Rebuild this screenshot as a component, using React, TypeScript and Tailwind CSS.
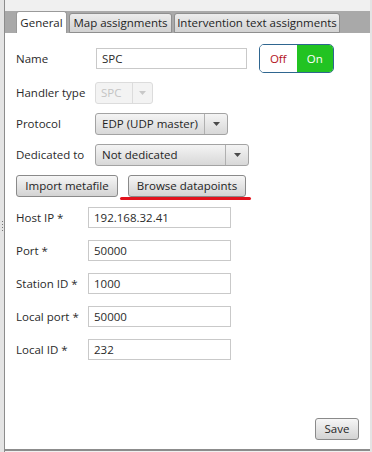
import { ReactNode } from 'react'

const font = { fontFamily: '"Open Sans", "Noto Sans", sans-serif' }

function TextBox({ value, width }: { value: string; width: string }) {
  return (
    <div className={`${width} h-[21px] bg-white border border-[#c9c9c9] flex items-center pl-[5px] text-[#2a2a2a]`}>
      {value}
    </div>
  )
}

function Arrow({ color = '#4a4a4a' }: { color?: string }) {
  return (
    <svg width="7" height="4" viewBox="0 0 7 4">
      <path d="M0 0 L7 0 L3.5 4 Z" fill={color} />
    </svg>
  )
}

function Combo({ value, width, disabled }: { value: string; width: string; disabled?: boolean }) {
  if (disabled) {
    return (
      <div className={`${width} h-[22px] rounded-[3px] border border-[#dcdcdc] bg-[#f3f3f3] flex items-stretch text-[#c4c4c4]`}>
        <div className="flex-1 flex items-center pl-[5px]">{value}</div>
        <div className="w-[20px] border-l border-[#dcdcdc] flex items-center justify-center">
          <Arrow color="#c8c8c8" />
        </div>
      </div>
    )
  }
  return (
    <div className={`${width} h-[22px] rounded-[3px] border border-[#a3a3a3] bg-gradient-to-b from-[#f4f4f4] to-[#d8d8d8] flex items-stretch text-[#1f1f1f]`}>
      <div className="flex-1 flex items-center pl-[6px]">{value}</div>
      <div className="w-[23px] border-l border-[#b0b0b0] flex items-center justify-center">
        <Arrow />
      </div>
    </div>
  )
}

function Button({ children, className = '' }: { children: ReactNode; className?: string }) {
  return (
    <div className={`h-[22px] rounded-[3px] border border-[#8a8a8a] bg-gradient-to-b from-[#f6f6f6] to-[#d3d3d3] flex items-center justify-center text-[#1f1f1f] ${className}`}>
      {children}
    </div>
  )
}

function Row({ label, labelWidth, children, className = '' }: { label: string; labelWidth: string; children: ReactNode; className?: string }) {
  return (
    <div className={`flex items-center ${className}`}>
      <div className={`${labelWidth} text-[#2a2a2a]`}>{label}</div>
      {children}
    </div>
  )
}

export default function App() {
  const fields = [
    { label: 'Port *', value: '50000' },
    { label: 'Station ID *', value: '1000' },
    { label: 'Local port *', value: '50000' },
    { label: 'Local ID *', value: '232' },
  ]

  return (
    <div className="w-[372px] h-[452px] flex bg-[#f0f0f0] text-[11.5px] overflow-hidden" style={font}>
      <div className="w-[4px] bg-[#e4e4e4] flex flex-col items-center justify-center gap-[2px]">
        <div className="w-[1px] h-[1px] bg-[#777]" />
        <div className="w-[1px] h-[1px] bg-[#777]" />
        <div className="w-[1px] h-[1px] bg-[#777]" />
        <div className="w-[1px] h-[1px] bg-[#777]" />
      </div>
      <div className="w-[1px] bg-[#8c8c8c]" />

      <div className="flex-1 flex flex-col">
        <div className="h-[11px] bg-[#f0f0f0]" />
        <div className="h-[22px] bg-[#a9a9a9] flex items-end pl-[11px] gap-[2px]">
          <div className="h-[22px] w-[51px] bg-white rounded-t-[3px] border border-b-0 border-[#9a9a9a] flex items-center justify-center text-[#1f1f1f]">
            General
          </div>
          <div className="h-[20px] w-[103px] rounded-t-[3px] border border-[#8f8f8f] bg-gradient-to-b from-[#ececec] to-[#d2d2d2] flex items-center justify-center text-[#1f1f1f]">
            Map assignments
          </div>
          <div className="h-[20px] w-[166px] rounded-t-[3px] border border-[#8f8f8f] bg-gradient-to-b from-[#ececec] to-[#d2d2d2] flex items-center justify-center text-[#1f1f1f]">
            Intervention text assignments
          </div>
        </div>

        <div className="flex-1 bg-white flex flex-col pl-[11px] pr-[11px]">
          <Row label="Name" labelWidth="w-[80px]" className="mt-[11px] h-[29px]">
            <TextBox value="SPC" width="w-[151px]" />
            <div className="ml-[12px] w-[75px] h-[29px] rounded-[5px] border border-[#2f6690] flex overflow-hidden">
              <div className="flex-1 bg-white flex items-center justify-center text-[#b3121b]">Off</div>
              <div className="flex-1 bg-[#22c322] flex items-center justify-center text-white">On</div>
            </div>
          </Row>

          <Row label="Handler type" labelWidth="w-[79px]" className="mt-[9px]">
            <Combo value="SPC" width="w-[58px]" disabled />
          </Row>

          <Row label="Protocol" labelWidth="w-[79px]" className="mt-[9px]">
            <Combo value="EDP (UDP master)" width="w-[133px]" />
          </Row>

          <Row label="Dedicated to" labelWidth="w-[79px]" className="mt-[9px]">
            <Combo value="Not dedicated" width="w-[154px]" />
          </Row>

          <div className="mt-[9px] flex items-center gap-[10px] relative">
            <Button className="w-[102px]">Import metafile</Button>
            <Button className="w-[118px]">Browse datapoints</Button>
            <div className="absolute left-[104px] top-[22px] w-[131px] h-[3px] rounded-full bg-[#e2121c]" />
          </div>

          <Row label="Host IP *" labelWidth="w-[72px]" className="mt-[10px]">
            <TextBox value="192.168.32.41" width="w-[143px]" />
          </Row>

          {fields.map((f) => (
            <Row key={f.label} label={f.label} labelWidth="w-[72px]" className="mt-[12px]">
              <TextBox value={f.value} width="w-[143px]" />
            </Row>
          ))}

          <div className="flex-1" />
          <div className="flex justify-end mb-[9px]">
            <Button className="w-[44px]">Save</Button>
          </div>
        </div>
        <div className="h-[2px] bg-[#8c8c8c]" />
        <div className="h-[1px] bg-[#f0f0f0]" />
      </div>
      <div className="w-[2px] bg-[#e4e4e4]" />
    </div>
  )
}
